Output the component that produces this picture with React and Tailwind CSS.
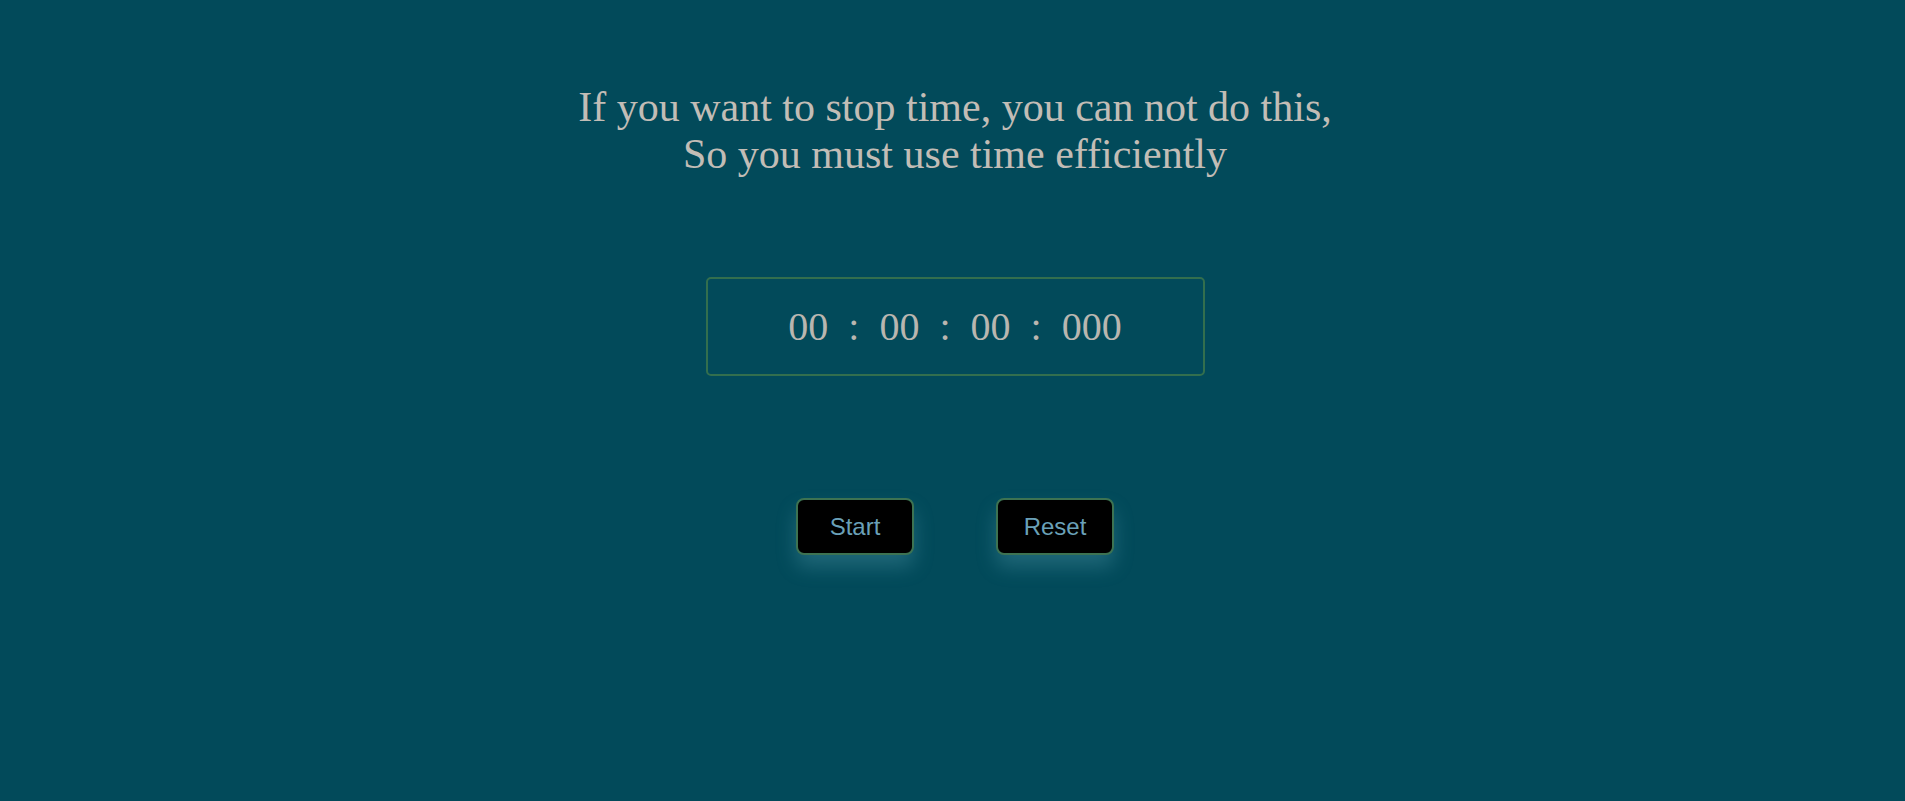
export default function App() {
  return (
    <div className="w-full h-[801px] bg-[#024a5a] flex flex-col items-center pt-[84px] pl-[5px] font-['Liberation_Serif',serif]">
      <h1 className="text-[42px] leading-[47px] text-center text-[#c2bdb6] font-normal">
        If you want to stop time, you can not do this,
        <br />
        So you must use time efficiently
      </h1>
      <div className="mt-[99px] w-[499px] h-[99px] border-2 border-[#336f4e] rounded-[5px] flex items-center justify-center">
        <span className="text-[40px] text-[#b9b6b0] whitespace-pre">
          00{'  '}:{'  '}00{'  '}:{'  '}00{'  '}:{'  '}000
        </span>
      </div>
      <div className="mt-[122px] flex gap-[82px] font-['Liberation_Sans',Arial,sans-serif]">
        <button className="w-[118px] h-[57px] bg-black border-2 border-[#3d7352] rounded-[8px] text-[24px] text-[#6aa0b8] shadow-[0_12px_20px_rgba(120,190,210,0.25)]">
          Start
        </button>
        <button className="w-[118px] h-[57px] bg-black border-2 border-[#3d7352] rounded-[8px] text-[24px] text-[#6aa0b8] shadow-[0_12px_20px_rgba(120,190,210,0.25)]">
          Reset
        </button>
      </div>
    </div>
  );
}
